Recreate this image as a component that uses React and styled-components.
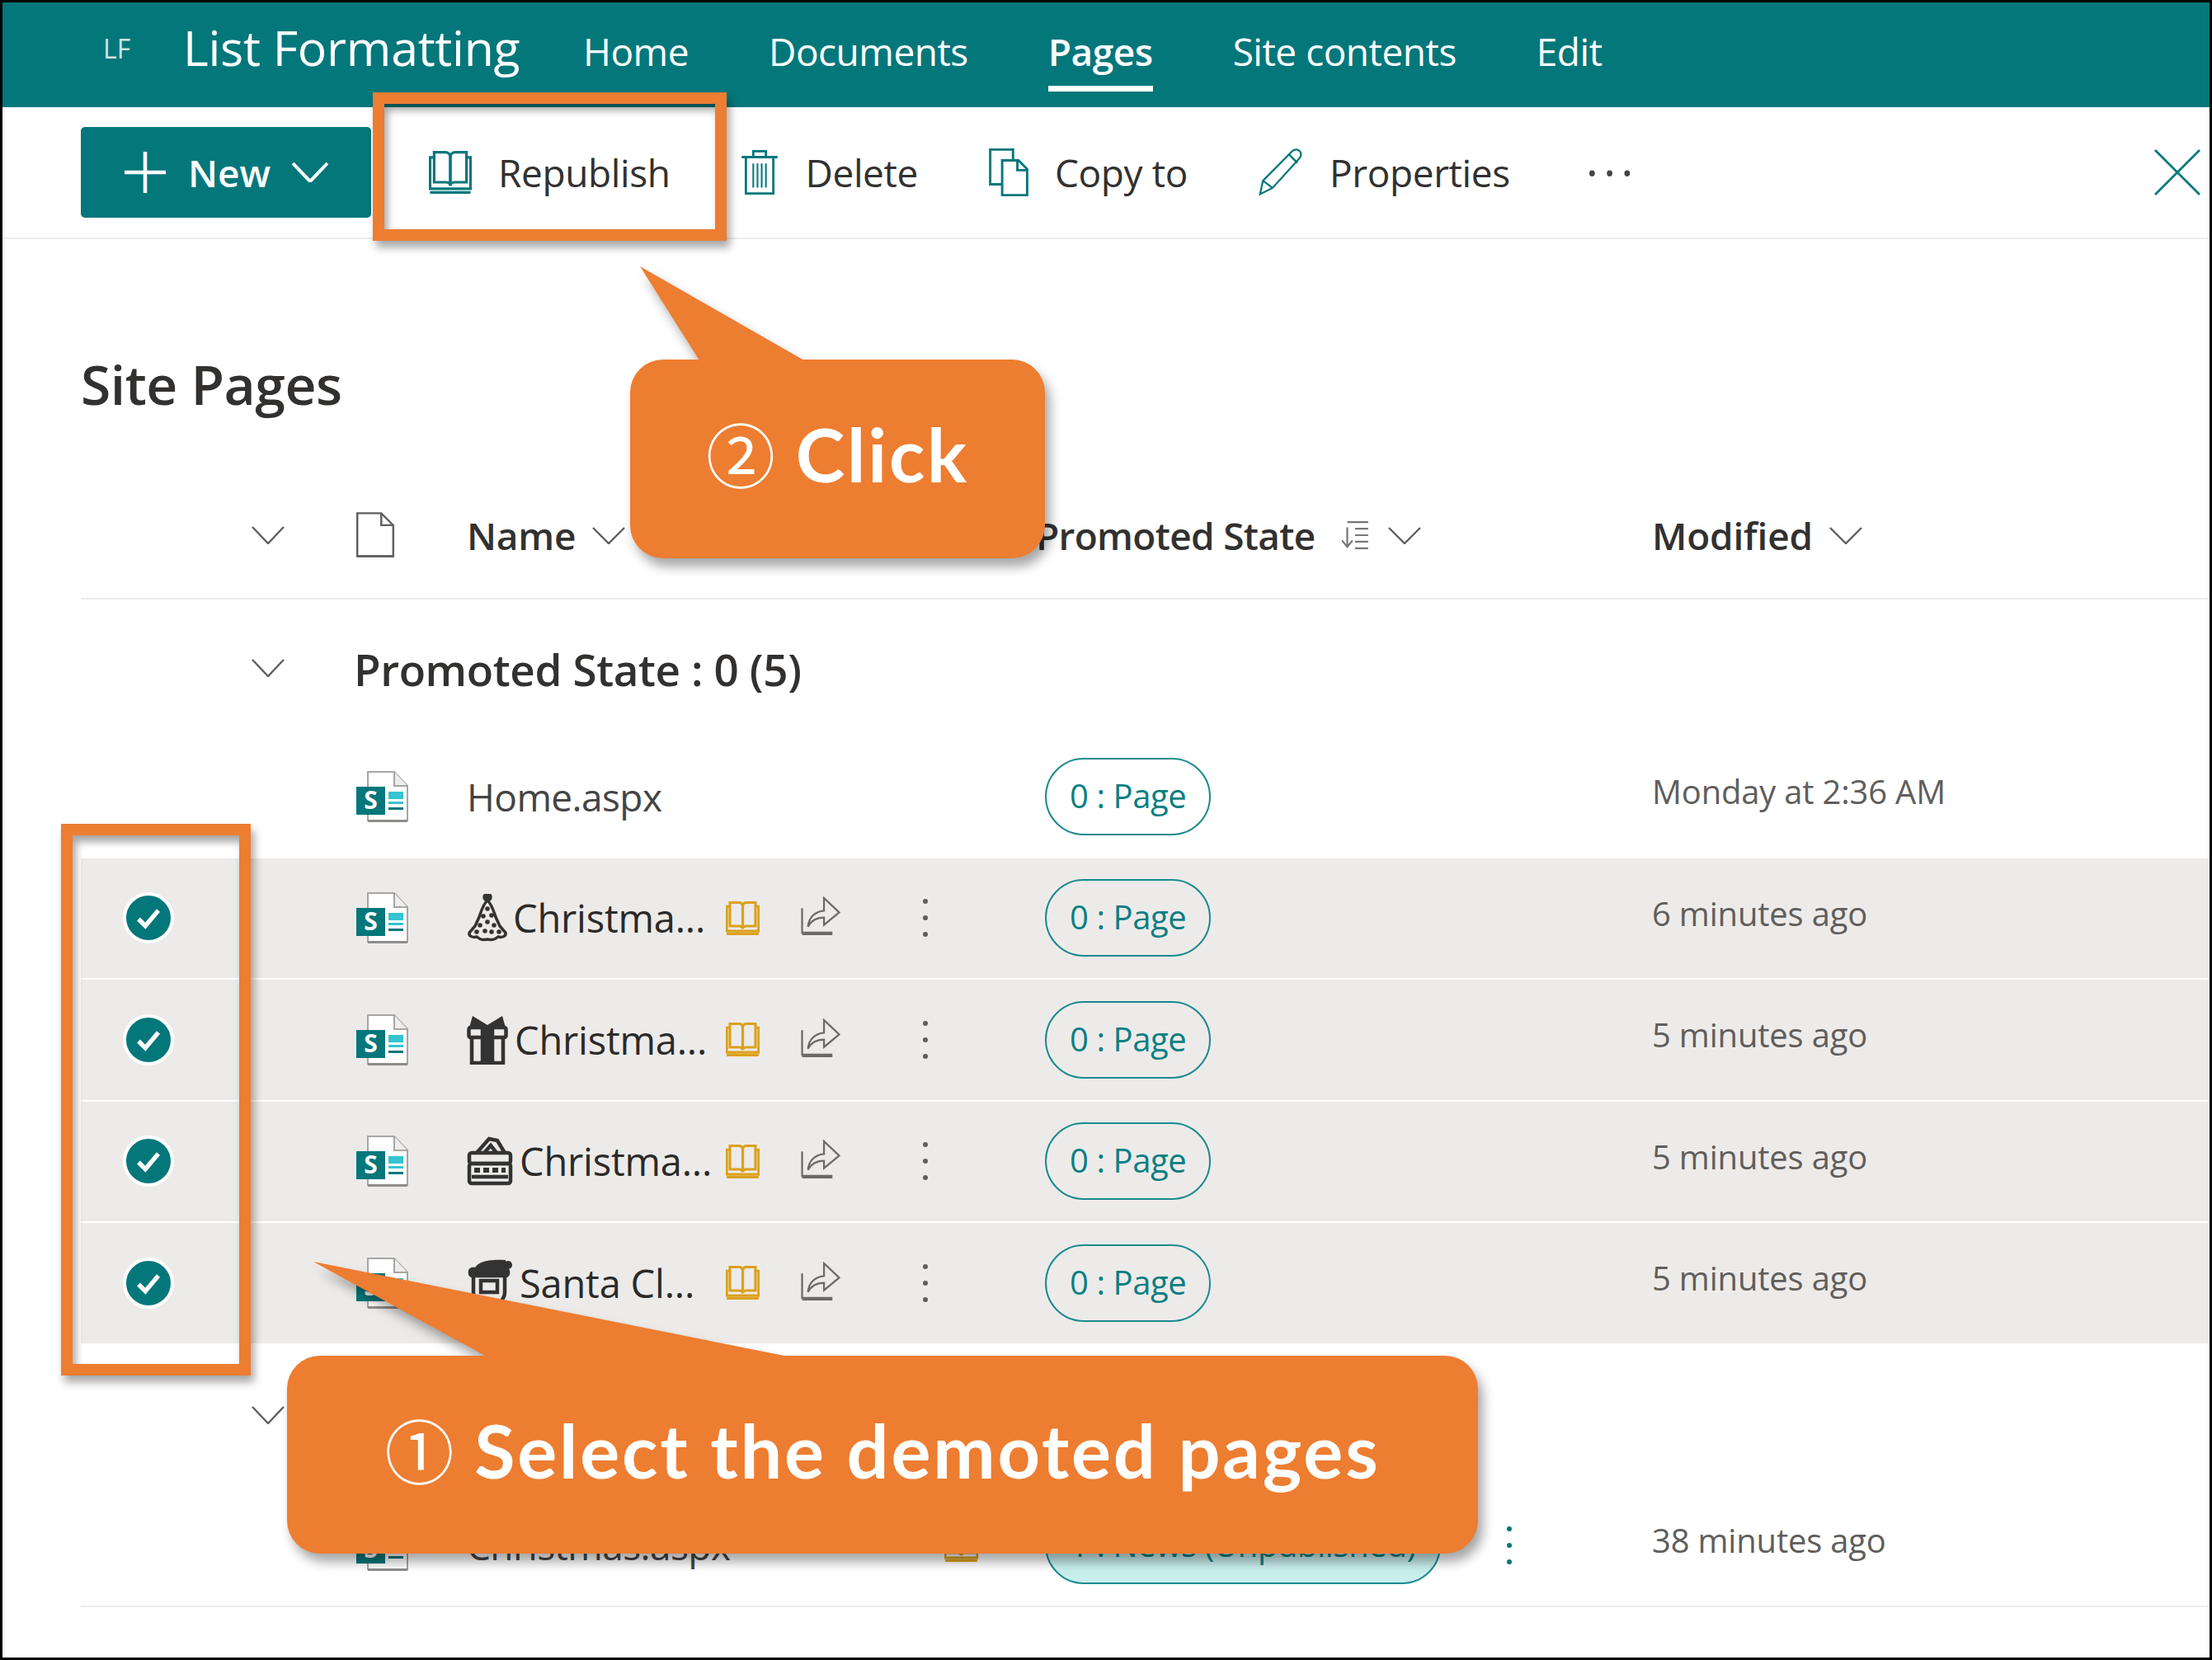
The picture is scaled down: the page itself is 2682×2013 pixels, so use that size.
import React from 'react';
import styled, { createGlobalStyle } from 'styled-components';

const TEAL = '#04777b';
const ORANGE = '#ed7d31';
const INK = '#323130';
const SOFT = '#605e5c';
const BOOK = '#dba11c';

const Global = createGlobalStyle`
    html, body { margin: 0; padding: 0; background: #fff; }
    * { box-sizing: border-box; }
`;

const rows = [
    { icon: 'tree', name: 'Christma...', gap: 6, modified: '6 minutes ago' },
    { icon: 'gift', name: 'Christma...', gap: 8, modified: '5 minutes ago' },
    { icon: 'stove', name: 'Christma...', gap: 8, modified: '5 minutes ago' },
    { icon: 'santa', name: 'Santa Cl...', gap: 8, modified: '5 minutes ago' },
];

const Stroke = ({ size = 52, h, color = TEAL, sw = 1.2, children, vb = '0 0 24 24' }) => (
    <svg width={size} height={h || size} viewBox={vb} fill="none" stroke={color} strokeWidth={sw} style={{ flex: 'none', display: 'block' }}>
        {children}
    </svg>
);

const Chevron = ({ w = 40, h = 22, color = SOFT, sw = 2.4 }) => (
    <svg width={w} height={h} viewBox={`0 0 ${w} ${h}`} fill="none" stroke={color} strokeWidth={sw} style={{ flex: 'none', display: 'block' }}>
        <path d={`M1 1 L${w / 2} ${h - 1} L${w - 1} 1`} />
    </svg>
);

const BookIcon = ({ size = 52, color = TEAL, sw = 1.3 }) => (
    <Stroke size={size} color={color} sw={sw} vb="1.4 1.8 21.2 21.2">
        <path d="M4 2.500h5.500C11 2.500 12 3.500 12 5v14c0-1-1-1.700-2.200-1.700H4z" />
        <path d="M20 2.500h-5.500C13 2.500 12 3.500 12 5v14c0-1 1-1.700 2.200-1.700H20z" />
        <path d="M4 5H2v15.500h20V5h-2" />
        <path d="M2 22.300h20" />
    </Stroke>
);

const TrashIcon = () => (
    <Stroke size={46} h={58} sw={1.1} vb="3 1.500 18 21.500">
        <path d="M3.500 5h17M9 5V2.200h6V5M5.500 5v17.300h13V5" />
        <path d="M9 8v11.500M11 8v11.500M13 8v11.500M15 8v11.500" strokeWidth="0.8" />
    </Stroke>
);

const CopyIcon = () => (
    <Stroke size={48} h={58} sw={1.1} vb="3 1 18 22">
        <path d="M14 6V1.500H3.500v16H9" />
        <path d="M9 6.500h7.500l4 4v12H9z" />
        <path d="M16 6.500v4.500h4.500" />
    </Stroke>
);

const PencilIcon = () => (
    <Stroke size={54} h={58} sw={0.9} vb="1.500 1 21 23">
        <path d="M2 23l1.400-6.500L17.500 2.300c1-1 2.600-1 3.500-.1.900.900.900 2.500 0 3.500L8 20z" />
        <path d="M3.400 16.500L8 20M16 4l4 4" />
    </Stroke>
);

const FileBlank = () => (
    <Stroke size={46} h={56} color="#605e5c" sw={1} vb="0.500 0.500 19 23">
        <path d="M1 1h12l6 6v15.500H1z" />
        <path d="M13 1v6h6M1 22.500h18" />
    </Stroke>
);

const SortIcon = () => (
    <Stroke size={40} h={38} color="#777" sw={1.4}>
        <path d="M6 2h16M12 7h10M12 12h10M12 17h10M12 22h10" />
        <path d="M6 6v14M2 16l4 5 4-5" />
    </Stroke>
);

const ShareIcon = () => (
    <Stroke size={54} h={48} color="#6b6a68" sw={1.1} vb="0.500 1 23 23.500">
        <path d="M1 8v14.500h18" />
        <path d="M1 23.500h18" />
        <path d="M4.500 19c.5-5.500 4-9 9.500-9.500V2L23 10.500 14 18v-4.500c-4 0-7.500 1.500-9.500 5.500z" />
    </Stroke>
);

const Kebab = ({ color = '#5f5e5c' }) => (
    <svg width={8} height={48} viewBox="0 0 8 48" fill={color} style={{ display: 'block', flex: 'none' }}>
        <circle cx="4" cy="4" r="3" />
        <circle cx="4" cy="24" r="3" />
        <circle cx="4" cy="44" r="3" />
    </svg>
);

const SiteFile = () => (
    <svg width={63} height={62} viewBox="0 0 63 62" style={{ flex: 'none', display: 'block' }}>
        <path d="M14 1h32l16 17v42H14z" fill="#fff" stroke="#a8a6a4" strokeWidth="2" />
        <path d="M46 1v17h16" fill="#eee" stroke="#a8a6a4" strokeWidth="2" />
        <path d="M14 60.500h48" stroke="#8f8d8b" strokeWidth="3" />
        <rect x="39" y="25" width="18" height="9" fill="#35c4d0" />
        <rect x="39" y="37" width="18" height="3" fill="#35c4d0" />
        <rect x="39" y="44" width="18" height="3" fill={TEAL} />
        <rect x="0" y="19" width="35" height="34" fill={TEAL} />
        <text x="17.500" y="46" textAnchor="middle" fontFamily="'Open Sans', sans-serif" fontWeight="700" fontSize="30" fill="#fff">S</text>
    </svg>
);

const Ornament = ({ type }) => {
    const c = '#333';
    if (type === 'tree') return (
        <svg width={50} height={58} viewBox="0 0 50 58" fill="none" stroke={c} strokeWidth="3.500" style={{ flex: 'none', display: 'block' }}>
            <circle cx="25" cy="4" r="4" fill={c} />
            <path d="M25 8 C30 12 33 22 35 28 L40 39 L47 47 C48 52 42 53 38 52 C33 56 30 56 25 55 C20 56 17 56 12 52 C8 53 2 52 3 47 L10 39 L15 28 C17 22 20 12 25 8Z" />
            <g fill={c} stroke="none">
                <circle cx="25" cy="18" r="2.800" /><circle cx="20" cy="27" r="2.800" /><circle cx="30" cy="26" r="2.800" />
                <circle cx="25" cy="34" r="2.800" /><circle cx="16" cy="38" r="2.800" /><circle cx="33" cy="38" r="2.800" />
                <circle cx="22" cy="45" r="2.800" /><circle cx="30" cy="46" r="2.800" /><circle cx="12" cy="46" r="2.800" /><circle cx="39" cy="46" r="2.800" />
            </g>
        </svg>
    );
    if (type === 'gift') return (
        <svg width={50} height={60} viewBox="0 0 50 60" fill="none" stroke={c} strokeWidth="4.500" style={{ flex: 'none', display: 'block' }}>
            <path d="M7 1l18 11L43 1l4 14H3z" fill={c} stroke="none" />
            <rect x="2.500" y="15" width="45" height="12" rx="2" />
            <path d="M6 27v31h38V27" />
            <path d="M19 15v43h12V15" fill={c} />
        </svg>
    );
    if (type === 'stove') return (
        <svg width={56} height={60} viewBox="0 0 56 60" fill="none" stroke={c} strokeWidth="4.500" style={{ flex: 'none', display: 'block' }}>
            <path d="M12 20 L27 3 L37 5 L46 20" />
            <path d="M21 20 L29 11 L36 20" />
            <rect x="3" y="20" width="50" height="13" rx="3" />
            <rect x="3" y="33" width="50" height="24" rx="3" />
            <path d="M9 41h38" strokeDasharray="7 4" strokeWidth="6" />
            <path d="M6 49h44" />
        </svg>
    );
    return (
        <svg width={56} height={60} viewBox="0 0 56 60" fill="none" stroke={c} strokeWidth="4.500" style={{ flex: 'none', display: 'block' }}>
            <path d="M8 17 C10 4 24 1 47 2 L50 17Z" fill={c} stroke="none" />
            <circle cx="50" cy="8" r="5" fill={c} stroke="none" />
            <rect x="4" y="13" width="46" height="8" rx="3" fill={c} />
            <path d="M8 21v20c0 9 9 17 19 17s19-8 19-17V21" />
            <rect x="17" y="27" width="20" height="14" />
        </svg>
    );
};

const Check = () => (
    <CheckWrap>
        <svg width={36} height={36} viewBox="0 0 24 24" fill="none" stroke="#fff" strokeWidth="3.600">
            <path d="M4 13l5.500 5.500L20 6" />
        </svg>
    </CheckWrap>
);

const App = () => (
    <Frame>
        <Global />
        <Header>
            <Initials>LF</Initials>
            <SiteTitle>List Formatting</SiteTitle>
            <Nav>
                <NavItem>Home</NavItem>
                <NavItem>Documents</NavItem>
                <NavItem $active>Pages</NavItem>
                <NavItem>Site contents</NavItem>
                <NavItem>Edit</NavItem>
            </Nav>
        </Header>

        <CommandBar>
            <NewButton>
                <svg width={52} height={52} viewBox="0 0 52 52" stroke="#fff" strokeWidth="4.500"><path d="M26 1v50M1 26h50" /></svg>
                <span>New</span>
                <Chevron w={44} h={24} color="#fff" sw={4} />
            </NewButton>
            <Commands>
                <Command><BookIcon /><span>Republish</span></Command>
                <Command><TrashIcon /><span>Delete</span></Command>
                <Command><CopyIcon /><span>Copy to</span></Command>
                <Command><PencilIcon /><span>Properties</span></Command>
                <More>···</More>
            </Commands>
            <Close>
                <svg width={56} height={56} viewBox="0 0 56 56" stroke={TEAL} strokeWidth="2.800"><path d="M1 1l54 54M55 1L1 55" /></svg>
            </Close>
        </CommandBar>

        <Main>
            <PageTitle>Site Pages</PageTitle>

            <ColumnRow>
                <ChevronCell><Chevron /></ChevronCell>
                <IconCell><FileBlank /></IconCell>
                <HeadCell>Name<Chevron h={21} /></HeadCell>
                <HeadCell $shift>Promoted State<SortGap><SortIcon /></SortGap><Chevron h={21} /></HeadCell>
                <HeadCell>Modified<Chevron h={21} /></HeadCell>
            </ColumnRow>

            <GroupRow>
                <ChevronCell><Chevron /></ChevronCell>
                <GroupLabel>Promoted State : 0 (5)</GroupLabel>
            </GroupRow>

            <Row>
                <span />
                <IconCell><SiteFile /></IconCell>
                <NameCell><NameText>Home.aspx</NameText></NameCell>
                <PillCell><Pill>0 : Page</Pill></PillCell>
                <Modified>Monday at 2:36 AM</Modified>
            </Row>

            {rows.map((r, i) => (
                <Row $selected key={i}>
                    <CheckCell><Check /></CheckCell>
                    <IconCell><SiteFile /></IconCell>
                    <NameCell>
                        <NameGroup>
                            <Ornament type={r.icon} />
                            <NameText $strong style={{ marginLeft: r.gap }}>{r.name}</NameText>
                        </NameGroup>
                        <BookIcon size={41} color={BOOK} sw={1.6} />
                        <RowShare><ShareIcon /></RowShare>
                        <RowDots><Kebab /></RowDots>
                    </NameCell>
                    <PillCell><Pill>0 : Page</Pill></PillCell>
                    <Modified>{r.modified}</Modified>
                </Row>
            ))}

            <GroupRow $second>
                <ChevronCell><Chevron /></ChevronCell>
                <GroupLabel>Promoted State : 1 (1)</GroupLabel>
            </GroupRow>

            <Row $last>
                <span />
                <IconCell><SiteFile /></IconCell>
                <NameCell>
                    <NameText>Christmas.aspx</NameText>
                    <LastBook><BookIcon size={41} color={BOOK} sw={1.6} /></LastBook>
                </NameCell>
                <PillCell>
                    <Pill $filled>1 : News (Unpublished)</Pill>
                    <LastDots><Kebab color={TEAL} /></LastDots>
                </PillCell>
                <Modified>38 minutes ago</Modified>
            </Row>
        </Main>

        <Highlight $x={449} $y={109} $w={429} $h={180} />
        <Highlight $x={71} $y={996} $w={230} $h={669} />

        <Callout $x={761} $y={433} $w={503} $h={241}>
            <CallTail width={220} height={114} viewBox="0 0 220 114">
                <path d="M12 0 L211 114 L84 114 Z" fill={ORANGE} />
            </CallTail>
            <CallText><Circled>②</Circled> Click</CallText>
        </Callout>
        <Callout $x={345} $y={1641} $w={1444} $h={240}>
            <CallTail width={620} height={115} viewBox="0 0 620 115">
                <path d="M32 0 L608 115 L242 115 Z" fill={ORANGE} />
            </CallTail>
            <CallText><Circled>①</Circled> Select the demoted pages</CallText>
        </Callout>
    </Frame>
);

export default App;

const Frame = styled.div`
    position: relative;
    width: 2682px;
    height: 2013px;
    border: 3px solid #000;
    overflow: hidden;
    background: #fff;
    font-family: "Open Sans", "Noto Sans", sans-serif;
    color: ${INK};
`;

const Header = styled.header`
    height: 127px;
    background: ${TEAL};
    color: #fff;
    display: flex;
    align-items: flex-start;
    padding: 19px 0 0 122px;
`;

const Initials = styled.div`
    width: 97px;
    font-size: 32px;
    line-height: 74px;
    color: #cfe4e4;
`;

const SiteTitle = styled.div`
    font-size: 59px;
    line-height: 70px;
    width: 485px;
    letter-spacing: -0.3px;
`;

const Nav = styled.nav`
    display: flex;
    gap: 97px;
`;

const NavItem = styled.div`
    font-size: 46px;
    line-height: 80px;
    height: 89px;
    letter-spacing: -0.5px;
    font-weight: ${({ $active }) => ($active ? 600 : 400)};
    border-bottom: 7px solid ${({ $active }) => ($active ? '#fff' : 'transparent')};
`;

const CommandBar = styled.div`
    height: 160px;
    display: flex;
    align-items: center;
    padding: 0 0 0 95px;
    border-bottom: 2px solid #ececec;
`;

const NewButton = styled.button`
    width: 352px;
    height: 110px;
    flex: none;
    border: none;
    border-radius: 5px;
    background: ${TEAL};
    color: #fff;
    font: 600 46px "Open Sans", sans-serif;
    display: flex;
    align-items: center;
    padding: 0 0 0 52px;
    gap: 26px;
    svg { display: block; flex: none; }
`;

const Commands = styled.div`
    display: flex;
    align-items: center;
    gap: 86px;
    margin-left: 70px;
`;

const Command = styled.div`
    display: flex;
    align-items: center;
    gap: 32px;
    font-size: 46px;
    letter-spacing: -0.4px;
`;

const More = styled.div`
    font-size: 58px;
    line-height: 58px;
    letter-spacing: 6px;
    color: #444;
    margin-left: 6px;
`;

const Close = styled.div`
    margin-left: auto;
    margin-right: 11px;
    svg { display: block; }
`;

const Main = styled.main`
    padding-left: 95px;
`;

const PageTitle = styled.h1`
    margin: 0;
    height: 287px;
    padding-top: 125px;
    font-size: 66px;
    line-height: 100px;
    font-weight: 600;
    letter-spacing: -0.5px;
`;

const columns = '334px 134px 701px 736px 1fr';

const ColumnRow = styled.div`
    display: grid;
    grid-template-columns: ${columns};
    align-items: center;
    height: 150px;
    border-bottom: 2px solid #ececec;
    padding-bottom: 4px;
`;

const ChevronCell = styled.div`
    padding-left: 207px;
`;

const IconCell = styled.div`
    display: flex;
    align-items: center;
`;

const HeadCell = styled.div`
    display: flex;
    align-items: center;
    gap: 20px;
    font-size: 46px;
    font-weight: 600;
    letter-spacing: ${({ $shift }) => ($shift ? '-0.7px' : '-0.2px')};
    margin-left: ${({ $shift }) => ($shift ? '-11px' : '0')};
`;

const SortGap = styled.span`
    margin-left: 8px;
`;

const GroupRow = styled.div`
    display: grid;
    grid-template-columns: 334px 1fr;
    align-items: center;
    height: ${({ $second }) => ($second ? '170px' : '166px')};
`;

const GroupLabel = styled.div`
    font-size: 53px;
    font-weight: 600;
    letter-spacing: -0.4px;
    margin-left: -3px;
    padding-top: 2px;
`;

const Row = styled.div`
    display: grid;
    grid-template-columns: ${columns};
    align-items: center;
    height: ${({ $last }) => ($last ? '148px' : '147.5px')};
    background: ${({ $selected }) => ($selected ? '#edebe9' : 'transparent')};
    border-bottom: 2px solid ${({ $selected, $last }) => ($selected ? '#fff' : $last ? '#ececec' : 'transparent')};
`;

const CheckCell = styled.div`
    padding-left: 51px;
`;

const CheckWrap = styled.div`
    width: 62px;
    height: 62px;
    border-radius: 50%;
    background: ${TEAL};
    border: 4px solid #fff;
    display: flex;
    align-items: center;
    justify-content: center;
`;

const NameCell = styled.div`
    display: grid;
    grid-template-columns: 314px 88px 132px 1fr;
    align-items: center;
`;

const NameGroup = styled.div`
    display: flex;
    align-items: center;
    white-space: nowrap;
`;

const NameText = styled.span`
    font-size: ${({ $strong }) => ($strong ? '47px' : '46px')};
    white-space: nowrap;
    letter-spacing: ${({ $strong }) => ($strong ? '-0.2px' : '-0.6px')};
    color: ${({ $strong }) => ($strong ? '#2b2a29' : '#444')};
`;

const RowShare = styled.div`
    padding-bottom: 4px;
`;

const RowDots = styled.div`
    padding-left: 18px;
`;

const LastBook = styled.div`
    grid-column: 4;
    margin-left: 45px;
`;

const LastDots = styled.div`
    margin-left: 79px;
`;

const PillCell = styled.div`
    display: flex;
    align-items: center;
`;

const Pill = styled.div`
    height: 94px;
    padding: 0 28px;
    border-radius: 47px;
    border: 2.500px solid #1a8a8e;
    background: ${({ $filled }) => ($filled ? '#c9eeee' : 'transparent')};
    color: #0a7f83;
    font-size: 40px;
    line-height: 88px;
    white-space: nowrap;
    letter-spacing: -0.4px;
`;

const Modified = styled.div`
    font-size: 40px;
    color: ${SOFT};
    letter-spacing: -0.2px;
    padding-bottom: 12px;
`;

// annotation layer, lies over the page
const Highlight = styled.div`
    position: absolute;
    left: ${({ $x }) => $x}px;
    top: ${({ $y }) => $y}px;
    width: ${({ $w }) => $w}px;
    height: ${({ $h }) => $h}px;
    border: 14px solid ${ORANGE};
    box-shadow: 4px 8px 10px rgba(0, 0, 0, 0.35), inset 4px 8px 10px rgba(0, 0, 0, 0.35);
`;

const Callout = styled.div`
    position: absolute;
    left: ${({ $x }) => $x}px;
    top: ${({ $y }) => $y}px;
    width: ${({ $w }) => $w}px;
    height: ${({ $h }) => $h}px;
    background: ${ORANGE};
    border-radius: 40px;
    filter: drop-shadow(6px 10px 7px rgba(0, 0, 0, 0.35));
    display: flex;
    align-items: center;
    justify-content: center;
    padding-bottom: 16px;
`;

const CallTail = styled.svg`
    position: absolute;
    left: 0;
    bottom: calc(100% - 1px);
    display: block;
`;

const CallText = styled.div`
    font-family: Lato, "Noto Sans", sans-serif;
    font-weight: 700;
    font-size: 90px;
    letter-spacing: 2.8px;
    color: #fff;
    white-space: nowrap;
`;

const Circled = styled.span`
    font-family: "Noto Sans CJK JP", "DejaVu Sans", sans-serif;
    font-weight: 400;
    font-size: 84px;
    letter-spacing: 0;
`;
